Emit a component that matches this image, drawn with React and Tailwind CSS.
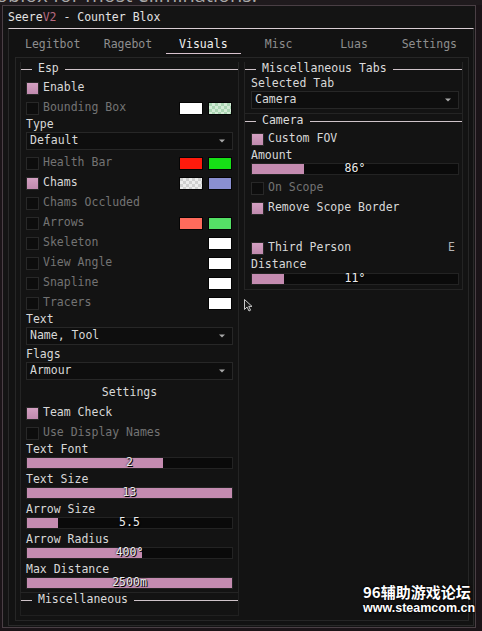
import React from "react";

const FONT = "font-['DejaVu_Sans_Mono',monospace]";

function Check({ checked }) {
  return (
    <div className="w-[13px] h-[13px] shrink-0 border border-[#282828] bg-[#0d0d0d]">
      {checked && <div className="w-full h-full bg-gradient-to-b from-[#d4a0c2] to-[#c08aae]" />}
    </div>
  );
}

function Swatch({ c }) {
  return <div className={`w-[24px] h-[13px] border border-[#050505] ${c}`} />;
}

function CheckRow({ label, checked, disabled, children }) {
  return (
    <div className="h-[20px] flex items-center">
      <Check checked={checked} />
      <span className={`ml-[4px] ${disabled ? "text-[#737373]" : "text-[#d8d8d8]"}`}>{label}</span>
      <div className="ml-auto flex items-center gap-[5px] mr-px">{children}</div>
    </div>
  );
}

function Label({ children }) {
  return <div className="h-[14px] flex items-center text-[#d8d8d8]">{children}</div>;
}

function Dropdown({ value }) {
  return (
    <div className="h-[18px] bg-[#0e0e0e] border border-[#272727] flex items-center pl-[3px] pr-[7px] text-[#d8d8d8]">
      <span>{value}</span>
      <svg className="ml-auto" width="6" height="4" viewBox="0 0 6 4">
        <path d="M0 0.5H6L3 3.5Z" fill="#a8a8a8" />
      </svg>
    </div>
  );
}

function Slider({ pct, value }) {
  return (
    <div className="relative h-[12px] bg-[#0a0a0a] border border-[#232323]">
      <div className="h-full bg-[#c48bb0]" style={{ width: pct + "%" }} />
      <div className="absolute inset-0 flex items-center justify-center text-[#ececec] [text-shadow:0_0_2px_#000,1px_1px_0_#000]">
        {value}
      </div>
    </div>
  );
}

function SliderBlock({ label, pct, value, first }) {
  return (
    <div className={first ? "" : "mt-[4px]"}>
      <Label>{label}</Label>
      <Slider pct={pct} value={value} />
    </div>
  );
}

function Header({ title, mb }) {
  return (
    <div className={`h-[14px] flex items-center ${mb}`}>
      <div className="w-[11px] h-px bg-[#cfc3c9]" />
      <span className="px-[6px] text-[#dcdcdc]">{title}</span>
      <div className="flex-1 h-px bg-[#cfc3c9]" />
    </div>
  );
}

const tabs = ["Legitbot", "Ragebot", "Visuals", "Misc", "Luas", "Settings"];

export default function App() {
  return (
    <div className={`relative w-[482px] h-[631px] overflow-hidden bg-[#1b1418] ${FONT} text-[11.5px] leading-none`}>
      <div className="h-[5px] overflow-hidden bg-[#1f1a1d]">
        <div className="mt-[-15px] ml-[-4px] whitespace-nowrap text-[20px] leading-[20px] text-[#a9a9a9] font-['Open_Sans',sans-serif]">
          oblox for most eliminations.
        </div>
      </div>

      <div className="ml-[2px] w-[474px] h-[623px] border border-[#4a3f45] bg-[#141414] flex flex-col">
        <div className="h-[22px] pt-px flex items-center pl-[5px] text-[#e2e2e2] whitespace-pre">
          Seere<span className="text-[#b86a80]">V2</span> - Counter Blox
        </div>

        <div className="ml-[5px] mr-px mb-px flex-1 border border-[#292929] border-t-[#d9cdd3] bg-[#121212] flex flex-col pb-[4px]">
          <div className="px-[6px] pt-[7px] pb-[3px] grid grid-cols-6">
            {tabs.map((t) => (
              <div
                key={t}
                className={`h-[18px] flex items-center justify-center ${
                  t === "Visuals" ? "border-b border-[#d9c3cf] text-[#f0f0f0]" : "text-[#8e8e8e]"
                }`}
              >
                {t}
              </div>
            ))}
          </div>

          <div className="ml-[6px] mr-[4px] h-[564px] border border-[#262626] bg-[#131313] pt-[4px] pl-[4px] flex gap-[5px]">
            {/* Left column */}
            <div className="w-[219px] flex flex-col">
              <div className="border border-t-0 border-[#242424] pb-[3px]">
                <Header title="Esp" mb="mb-[2px]" />
                <div className="px-[5px]">
                  <CheckRow label="Enable" checked />
                  <CheckRow label="Bounding Box" disabled>
                    <Swatch c="bg-white" />
                    <Swatch c="bg-[repeating-conic-gradient(#d4ecd7_0_25%,#abd6b4_0_50%)] bg-[length:6px_6px]" />
                  </CheckRow>
                  <Label>Type</Label>
                  <Dropdown value="Default" />
                  <div className="mt-[3px]">
                    <CheckRow label="Health Bar" disabled>
                      <Swatch c="bg-[#ff1a0c]" />
                      <Swatch c="bg-[#16e016]" />
                    </CheckRow>
                  </div>
                  <CheckRow label="Chams" checked>
                    <Swatch c="bg-[repeating-conic-gradient(#ececec_0_25%,#cfcfcf_0_50%)] bg-[length:6px_6px]" />
                    <Swatch c="bg-[#8a8fd0]" />
                  </CheckRow>
                  <CheckRow label="Chams Occluded" disabled />
                  <CheckRow label="Arrows" disabled>
                    <Swatch c="bg-[#ff6b5c]" />
                    <Swatch c="bg-[#55e066]" />
                  </CheckRow>
                  <CheckRow label="Skeleton" disabled>
                    <Swatch c="bg-white" />
                  </CheckRow>
                  <CheckRow label="View Angle" disabled>
                    <Swatch c="bg-white" />
                  </CheckRow>
                  <CheckRow label="Snapline" disabled>
                    <Swatch c="bg-white" />
                  </CheckRow>
                  <CheckRow label="Tracers" disabled>
                    <Swatch c="bg-white" />
                  </CheckRow>
                  <Label>Text</Label>
                  <Dropdown value="Name, Tool" />
                  <div className="mt-[3px]">
                    <Label>Flags</Label>
                  </div>
                  <Dropdown value="Armour" />
                  <div className="h-[20px] mt-[3px] flex items-center justify-center text-[#d8d8d8]">Settings</div>
                  <CheckRow label="Team Check" checked />
                  <CheckRow label="Use Display Names" disabled />
                  <SliderBlock first label="Text Font" pct={66.5} value="2" />
                  <SliderBlock label="Text Size" pct={100} value="13" />
                  <SliderBlock label="Arrow Size" pct={15} value="5.5" />
                  <SliderBlock label="Arrow Radius" pct={56} value="400°" />
                  <SliderBlock label="Max Distance" pct={100} value="2500m" />
                </div>
              </div>
              <div className="border border-t-0 border-[#202020] pb-[8px]">
                <Header title="Miscellaneous" mb="" />
              </div>
            </div>

            {/* Right column */}
            <div className="w-[219px] flex flex-col">
              <div className="border border-t-0 border-[#242424] pb-[4px]">
                <Header title="Miscellaneous Tabs" mb="mb-[1px]" />
                <div className="pl-[6px] pr-[3px]">
                  <Label>Selected Tab</Label>
                  <Dropdown value="Camera" />
                </div>
              </div>
              <div className="border border-t-0 border-[#242424] pb-[4px]">
                <Header title="Camera" mb="mb-[1px]" />
                <div className="pl-[6px] pr-[3px]">
                  <CheckRow label="Custom FOV" checked />
                  <Label>Amount</Label>
                  <Slider pct={25} value="86°" />
                  <div className="mt-[3px]">
                    <CheckRow label="On Scope" disabled />
                  </div>
                  <CheckRow label="Remove Scope Border" checked />
                  <div className="h-[20px]" />
                  <CheckRow label="Third Person" checked>
                    <span className="mr-[3px] text-[#b5b5b5]">E</span>
                  </CheckRow>
                  <Label>Distance</Label>
                  <div className="mt-[1px]">
                    <Slider pct={15.4} value="11°" />
                  </div>
                </div>
              </div>
            </div>
          </div>
        </div>
      </div>

      {/* mouse cursor */}
      <svg className="absolute left-[244px] top-[299px]" width="9" height="13" viewBox="0 0 9 13">
        <path d="M0.5 0.5V10.5L3 8L5 12L6.6 11.2L4.7 7.4H8Z" fill="#1a1a1a" stroke="#c8c8c8" strokeWidth="1" />
      </svg>

      {/* watermark */}
      <div className="absolute left-[363px] top-[584px] flex flex-col items-start text-white font-bold [text-shadow:0_0_2px_#000,0_0_3px_#000]">
        <div className="text-[15px] leading-[16px] font-['Noto_Sans_CJK_SC',sans-serif]">96辅助游戏论坛</div>
        <div className="mt-[2px] text-[12.5px] leading-[13px] font-['Liberation_Sans',sans-serif]">www.steamcom.cn</div>
      </div>
    </div>
  );
}
